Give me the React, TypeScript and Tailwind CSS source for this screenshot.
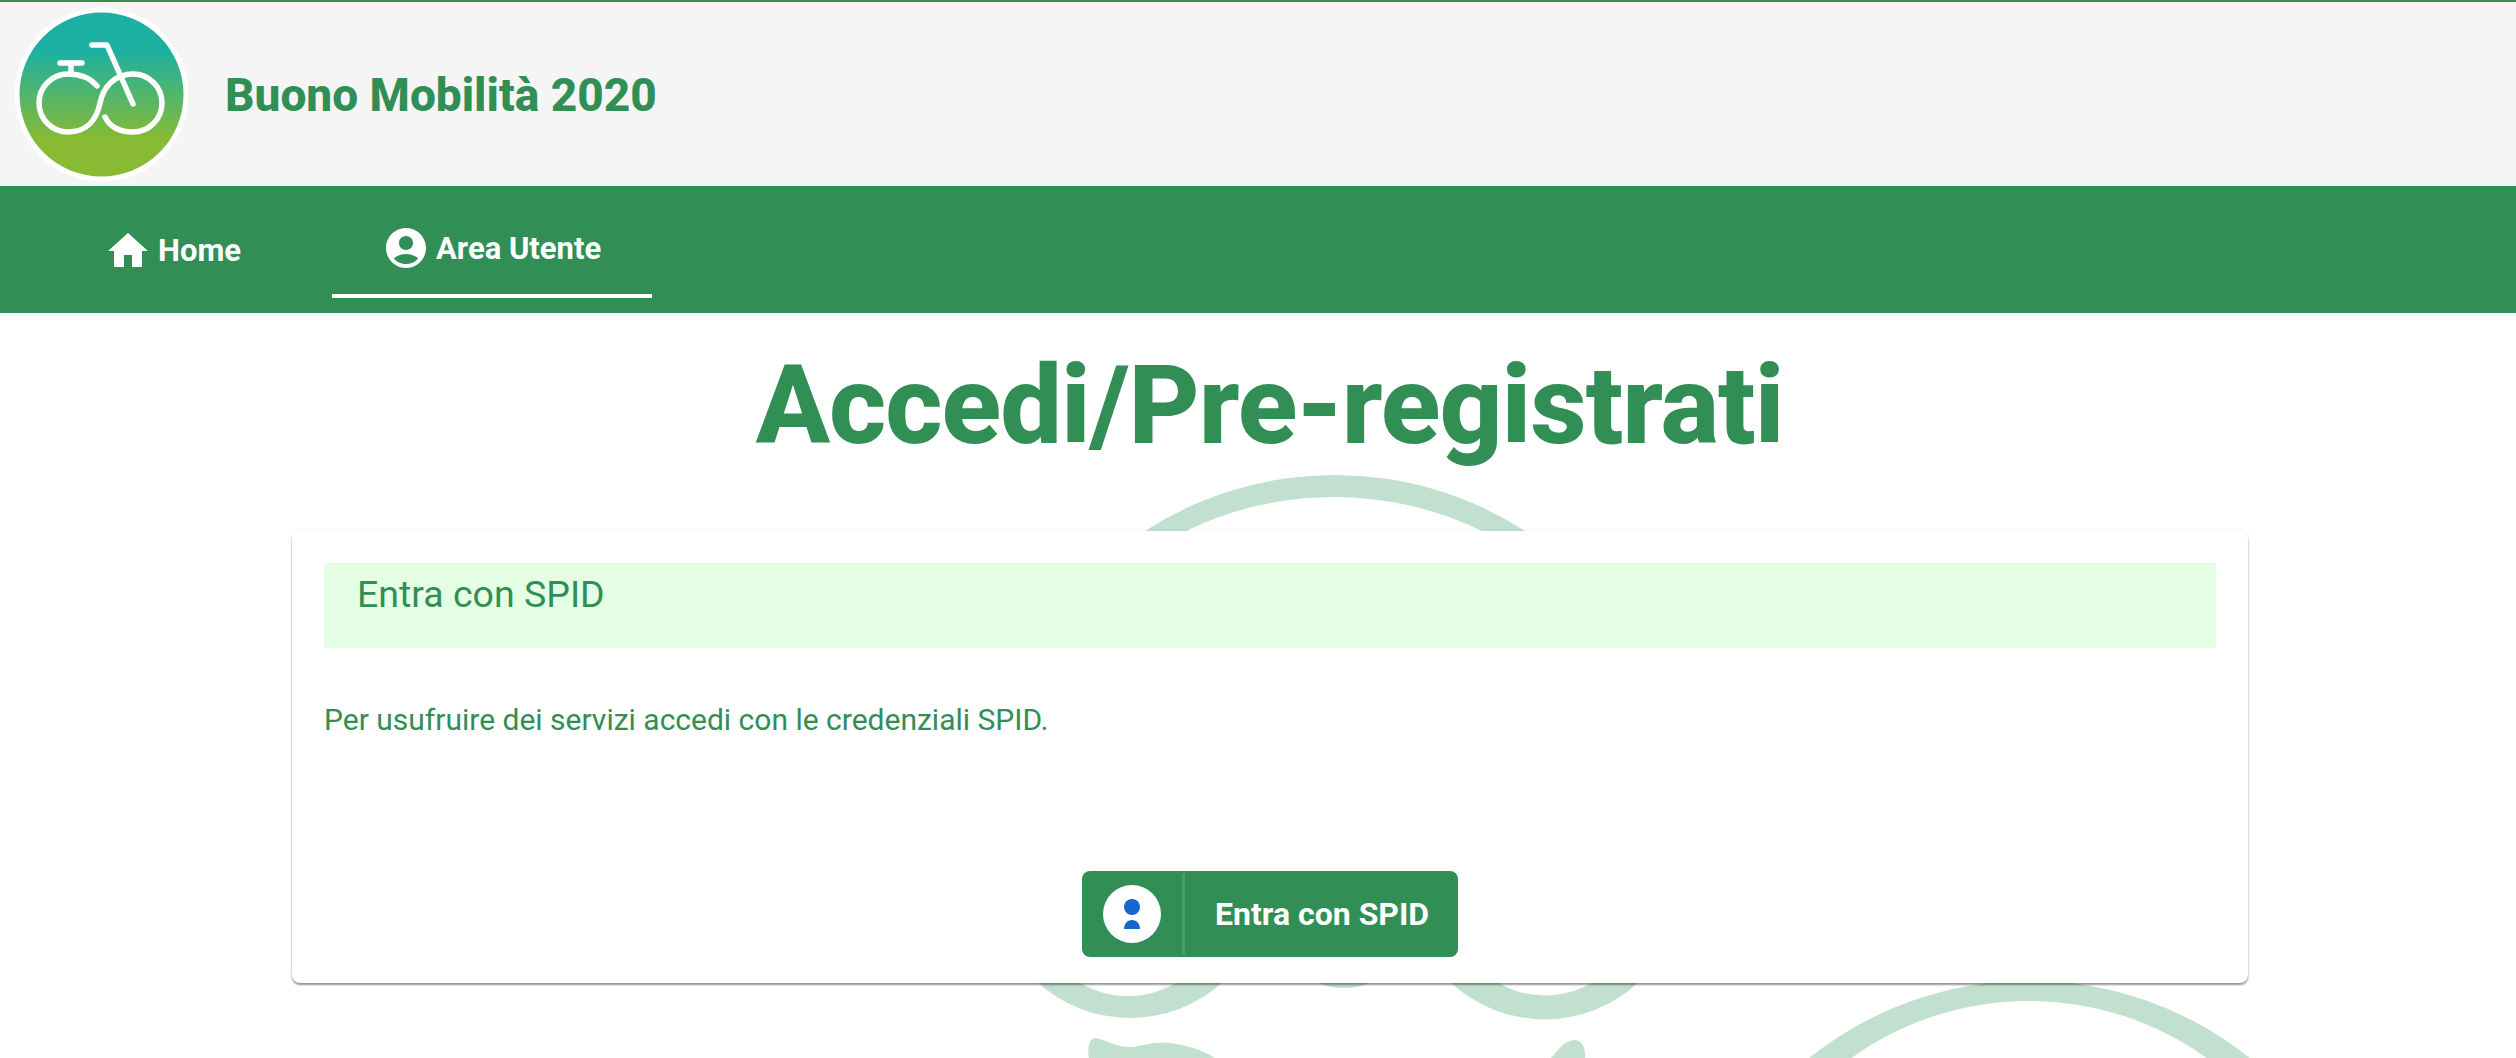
import React from 'react';

const BikeLogo: React.FC = () => (
  <svg viewBox="15 6 174 176" className="w-[174px] h-[176px] shrink-0">
    <defs>
      <linearGradient id="logoFill" gradientUnits="userSpaceOnUse" x1="0" y1="50" x2="0" y2="140">
        <stop offset="0" stopColor="#1cb0a3" />
        <stop offset="1" stopColor="#88bb33" />
      </linearGradient>
    </defs>
    <circle cx="101.5" cy="94.5" r="84.5" fill="url(#logoFill)" stroke="#ffffff" strokeWidth="5" />
    <g fill="none" stroke="#ffffff" strokeWidth="5.5" strokeLinecap="round" strokeLinejoin="round">
      <path d="M92 45h15l26 59" />
      <path d="M60 63h22M71 63v11" />
      <path d="M97 86C91 79 82 74 68 74a29 29 0 0 0 0 58c20 0 29-14 32-29 3-15 14-29 33-29a29 29 0 0 1 0 58c-13 0-23-5-28-15" />
    </g>
  </svg>
);

const Watermark: React.FC = () => (
  <svg viewBox="0 0 2516 746" className="absolute left-0 top-0 w-[2516px] h-[746px]" fill="#c2e0cf">
    <path d="M1145 218A350 350 0 0 1 1525 218L1482 218A339 339 0 0 0 1186 218Z" />
    <path d="M1036 668A138 138 0 0 0 1224 668L1179 668A94 94 0 0 1 1077 668Z" />
    <path d="M1449 668A138 138 0 0 0 1640 668L1595 668A94 94 0 0 1 1495 668Z" />
    <circle cx="1344" cy="605" r="70" />
    <path d="M1808 746A352 352 0 0 1 2251 746L2208 746A305 305 0 0 0 1850 746Z" />
    <path d="M1089 746C1087 735 1089 725 1096 725 1106 727 1118 735 1134 734 1150 730 1160 729 1171 730 1190 733 1205 738 1216 746Z" />
    <path d="M1550 746C1558 738 1564 727 1575 727 1583 728 1586 736 1585 746Z" />
  </svg>
);

const App: React.FC = () => {
  return (
    <div className="h-[1058px] w-[2516px] overflow-hidden bg-white text-[#318e55] font-['Roboto',sans-serif]">
      <header className="h-[186px] bg-[#f5f5f5] border-t-2 border-[#318e55] flex items-center pl-[15px]">
        <BikeLogo />
        <h2 className="ml-[36px] pt-[2px] text-[46px] font-extrabold leading-none">Buono Mobilità 2020</h2>
      </header>

      <nav className="h-[127px] bg-[#318e55] text-white flex pl-[84px] text-[31px] font-bold">
        <a className="w-[248px] h-[112px] flex items-center pl-[24px] pt-[16px] gap-[10px]">
          <svg viewBox="2 3 20 17" className="w-[40px] h-[34px]" fill="currentColor">
            <path d="M10 20v-6h4v6h5v-8h3L12 3 2 12h3v8z" />
          </svg>
          <span className="pt-[3px]">Home</span>
        </a>
        <a className="w-[320px] h-[112px] flex items-center pl-[54px] pt-[16px] gap-[10px] border-b-4 border-white">
          <svg viewBox="2 2 20 20" className="w-[40px] h-[40px]" fill="currentColor">
            <path d="M12 2C6.48 2 2 6.48 2 12s4.48 10 10 10 10-4.48 10-10S17.52 2 12 2zm0 4c1.93 0 3.5 1.57 3.5 3.5S13.93 13 12 13s-3.5-1.57-3.5-3.5S10.07 6 12 6zm0 14c-2.03 0-4.43-.82-6.14-2.88C7.55 15.8 9.68 15 12 15s4.45.8 6.14 2.12C16.43 19.18 14.03 20 12 20z" />
          </svg>
          <span className="pt-[3px]">Area Utente</span>
        </a>
      </nav>

      <main className="relative h-[745px]">
        <Watermark />
        <div className="relative">
          <div className="ml-[291px] mr-[268px] h-[218px] pt-[33px] text-center text-[110px] font-extrabold leading-[120px] tracking-[-1px]">
            <h1>Accedi/Pre-registrati</h1>
          </div>
          <section className="ml-[292px] mr-[268px] h-[452px] rounded-[8px] bg-white pt-[32px] px-[32px] shadow-[0_2px_2px_rgba(0,0,0,0.4),0_0_4px_rgba(0,0,0,0.06)]">
            <div className="h-[85px] bg-[#e5ffe5] pl-[33px] pt-[8px] text-[37.5px] leading-[46px]">Entra con SPID</div>
            <p className="mt-[52px] text-[30px] leading-[40px]">Per usufruire dei servizi accedi con le credenziali SPID.</p>
            <button className="mt-[131px] mx-auto w-[376px] h-[86px] rounded-[8px] bg-[#318e55] text-white flex items-center">
              <span className="w-[103px] h-[82px] flex items-center justify-center border-r-[3px] border-[#4a9c69]">
                <span className="w-[58px] h-[58px] rounded-full bg-white flex items-center justify-center">
                  <svg viewBox="0 0 18 30" className="w-[18px] h-[30px]" fill="#1667cc">
                    <circle cx="9" cy="8" r="8" />
                    <path d="M1 30c0-5 3-9 8-9s8 4 8 9z" />
                  </svg>
                </span>
              </span>
              <span className="ml-[30px] text-[32px] font-bold">Entra con SPID</span>
            </button>
          </section>
        </div>
      </main>
    </div>
  );
};

export default App;
